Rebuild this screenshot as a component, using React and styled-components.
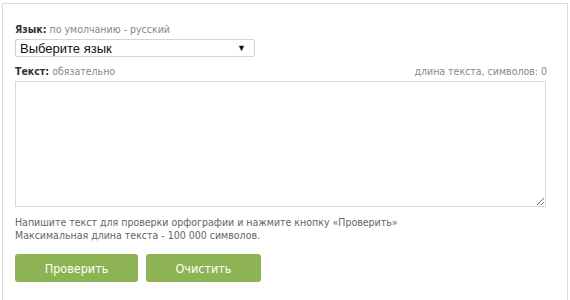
import React from 'react';
import styled, { createGlobalStyle } from 'styled-components';

const GlobalStyle = createGlobalStyle`
	html, body {
		margin: 0;
		padding: 0;
		background: #fff;
	}
	body {
		font-family: "DejaVu Sans Condensed", "DejaVu Sans", Tahoma, sans-serif;
		font-stretch: condensed;
	}
`;

const Page = styled.div`
	padding: 3px 2px 0 2px;
	width: 566px;
`;

const Card = styled.div`
	border: 1px solid #dcdcdc;
	border-bottom: none;
	padding: 19px 20px 30px 12px;
	height: 300px;
	box-sizing: border-box;
`;

const Row = styled.div`
	display: flex;
	justify-content: space-between;
	align-items: baseline;
	font-size: 10.5px;
	line-height: 13px;
	margin-bottom: ${(p) => p.gap || 3}px;
`;

const Label = styled.span`
	color: #333;
	font-weight: bold;
`;

const Note = styled.span`
	color: #888;
`;

const Select = styled.div`
	display: flex;
	align-items: center;
	justify-content: space-between;
	width: 240px;
	height: 18px;
	box-sizing: border-box;
	border: 1px solid #d4d4d4;
	border-radius: 2px;
	padding: 0 8px 0 4px;
	margin-bottom: 8px;
	font-family: "Liberation Sans", Arial, sans-serif;
	font-stretch: normal;
	font-size: 13px;
	color: #111;
`;

const Arrow = styled.span`
	font-size: 9px;
	color: #111;
`;

const TextArea = styled.textarea`
	display: block;
	width: 531px;
	height: 126px;
	box-sizing: border-box;
	border: 1px solid #d8d8d8;
	margin: 0 0 9px 0;
	resize: vertical;
	outline: none;
`;

const Hint = styled.div`
	color: #666;
	font-size: 10.5px;
	line-height: 13px;
	margin-bottom: 12px;
`;

const Buttons = styled.div`
	display: flex;
	gap: 8px;
`;

const Button = styled.button`
	width: ${(p) => p.w}px;
	height: 28px;
	border: none;
	border-radius: 3px;
	background: #8eb355;
	color: #fff;
	font-family: "DejaVu Sans Condensed", "DejaVu Sans", Tahoma, sans-serif;
	font-stretch: condensed;
	font-size: 12.5px;
	cursor: pointer;
`;

const App = () => (
	<>
		<GlobalStyle />
		<Page>
			<Card>
				<Row>
					<span>
						<Label>Язык:</Label> <Note>по умолчанию - русский</Note>
					</span>
				</Row>
				<Select>
					<span>Выберите язык</span>
					<Arrow>▼</Arrow>
				</Select>
				<Row gap={3}>
					<span>
						<Label>Текст:</Label> <Note>обязательно</Note>
					</span>
					<Note>длина текста, символов: 0</Note>
				</Row>
				<TextArea />
				<Hint>
					Напишите текст для проверки орфографии и нажмите кнопку «Проверить»
					<br />
					Максимальная длина текста - 100 000 символов.
				</Hint>
				<Buttons>
					<Button w={123}>Проверить</Button>
					<Button w={115}>Очистить</Button>
				</Buttons>
			</Card>
		</Page>
	</>
);

export default App;
